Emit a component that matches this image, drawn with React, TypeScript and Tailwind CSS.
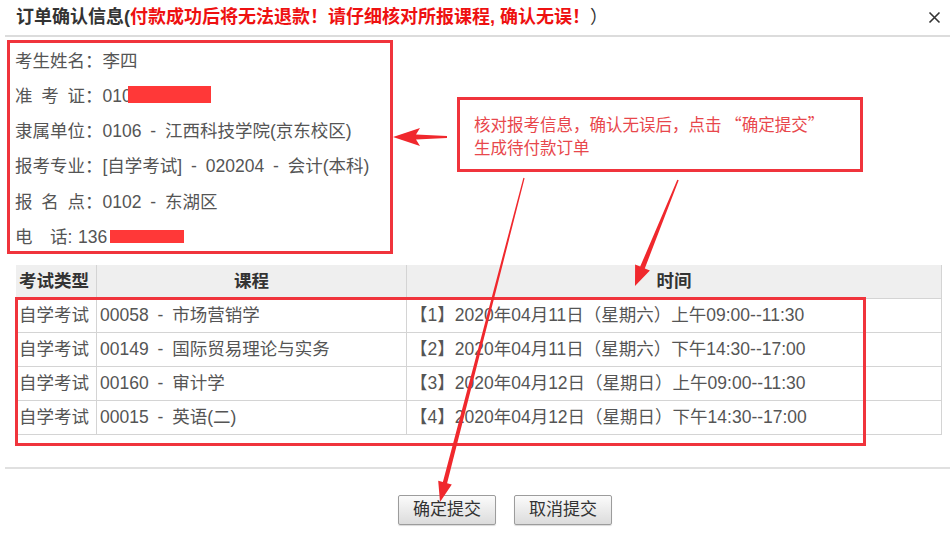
import React from "react";

const courses = [
  { type: "自学考试", course: "00058 - 市场营销学", time: "【1】2020年04月11日（星期六）上午09:00--11:30" },
  { type: "自学考试", course: "00149 - 国际贸易理论与实务", time: "【2】2020年04月11日（星期六）下午14:30--17:00" },
  { type: "自学考试", course: "00160 - 审计学", time: "【3】2020年04月12日（星期日）上午09:00--11:30" },
  { type: "自学考试", course: "00015 - 英语(二)", time: "【4】2020年04月12日（星期日）下午14:30--17:00" },
];

// label spread over 4em, like the old fixed-width page
function Label({ text }: { text: string }) {
  return (
    <>
      <span className="flex w-[4em] justify-between">
        {text.split("").map((c, i) => (
          <span key={i}>{c}</span>
        ))}
      </span>
      <span className="w-[1em]">：</span>
    </>
  );
}

function InfoRow({ label, children }: { label: React.ReactNode; children?: React.ReactNode }) {
  return (
    <div className="flex h-[35.3px] items-center">
      {label}
      <span>{children}</span>
    </div>
  );
}

function Button({ children }: { children: React.ReactNode }) {
  return (
    <button className="h-[30px] w-[98px] rounded-[2px] border border-[#9c9c9c] bg-linear-to-b from-[#fbfbfb] to-[#dcdcdc] text-[17px] text-[#333] shadow-[0_1px_1px_rgba(0,0,0,0.15)]">
      {children}
    </button>
  );
}

export default function App() {
  return (
    <div className="relative h-[548px] w-[950px] overflow-hidden bg-white font-['Liberation_Sans','Noto_Sans_CJK_SC',sans-serif] text-[17.5px] text-[#555]">
      {/* title */}
      <div className="ml-[5px] flex h-[37px] items-center justify-between border-b-2 border-[#dcdcdc] pl-[11px] pr-[9px]">
        <div className="text-[18px] font-bold text-[#333]">
          订单确认信息(
          <span className="text-[#ee1111]">付款成功后将无法退款！请仔细核对所报课程, 确认无误！</span>
          <span className="font-normal">）</span>
        </div>
        <svg width="13" height="13" viewBox="0 0 13 13" className="text-[#333]">
          <path d="M1.5 1.5 L11.5 11.5 M11.5 1.5 L1.5 11.5" stroke="currentColor" strokeWidth="1.6" />
        </svg>
      </div>

      {/* student info */}
      <div className="relative ml-[7px] mt-[3px] h-[214px] w-[386px] border-[3px] border-[#f0343c] pl-[5px] [word-spacing:4px]">
        <InfoRow label={<Label text="考生姓名" />}>李四</InfoRow>
        <InfoRow label={<Label text="准考证" />}>010</InfoRow>
        <InfoRow label={<Label text="隶属单位" />}>0106 - 江西科技学院(京东校区)</InfoRow>
        <InfoRow label={<Label text="报考专业" />}>[自学考试] - 020204 - 会计(本科)</InfoRow>
        <InfoRow label={<Label text="报名点" />}>0102 - 东湖区</InfoRow>
        <InfoRow
          label={
            <>
              <span className="flex w-[3em] justify-between">
                <span>电</span>
                <span>话</span>
              </span>
              <span className="w-[0.6em]">:</span>
            </>
          }
        >
          136
        </InfoRow>
        <div className="absolute left-[118px] top-[43px] h-[17px] w-[83px] bg-[#ff3838]" />
        <div className="absolute left-[100px] top-[187px] h-[13px] w-[74px] bg-[#ff3838]" />
      </div>

      {/* course table */}
      <div className="ml-[16px] mt-[11px] w-[926px] border-r border-[#d4d4d4] [word-spacing:4px]">
        <div className="grid h-[34px] grid-cols-[81px_310px_1fr] border-b border-[#d4d4d4] bg-[#efefef] font-bold text-[#333]">
          <div className="flex items-center border-r border-[#d4d4d4] pl-[3px]">考试类型</div>
          <div className="flex items-center justify-center border-r border-[#d4d4d4]">课程</div>
          <div className="flex items-center justify-center">时间</div>
        </div>
        {courses.map((c) => (
          <div key={c.time} className="grid h-[34px] grid-cols-[81px_310px_1fr] border-b border-[#d4d4d4]">
            <div className="flex items-center border-r border-[#d4d4d4] pl-[3px]">{c.type}</div>
            <div className="flex items-center border-r border-[#d4d4d4] pl-[3px]">{c.course}</div>
            <div className="flex items-center pl-[3px]">{c.time}</div>
          </div>
        ))}
      </div>

      <div className="ml-[5px] mt-[32px] h-[2px] bg-[#e0e0e0]" />

      <div className="mt-[26px] flex justify-center gap-[18px] pl-[60px]">
        <Button>确定提交</Button>
        <Button>取消提交</Button>
      </div>

      {/* annotations drawn over the dialog */}
      <div className="pointer-events-none absolute left-[15px] top-[297px] h-[149px] w-[851px] border-[3px] border-[#f0343c]" />
      <div className="absolute left-[457px] top-[97px] h-[75px] w-[406px] border-[3px] border-[#f0343c] bg-white pl-[14px] pt-[13px] font-['Noto_Sans_CJK_SC',sans-serif] text-[16.5px] leading-[23px] text-[#e8474c]">
        <div>核对报考信息，确认无误后，点击 “确定提交”</div>
        <div>生成待付款订单</div>
      </div>
      <svg className="pointer-events-none absolute inset-0" width="950" height="548" viewBox="0 0 950 548">
        <g fill="#f0282d">
          <polygon points="393,137 420,128 416,134.5 447,136 447,138 416,139.5 420,146" />
          <polygon points="523.4,177.8 524.6,178.2 447.1,483.2 451.8,484.4 440,502 438.2,480.8 442.9,482" />
          <polygon points="677.3,179.7 678.7,180.3 644.8,268.4 649.9,270.5 635,286 635.1,264.5 640.2,266.6" />
        </g>
      </svg>
    </div>
  );
}
